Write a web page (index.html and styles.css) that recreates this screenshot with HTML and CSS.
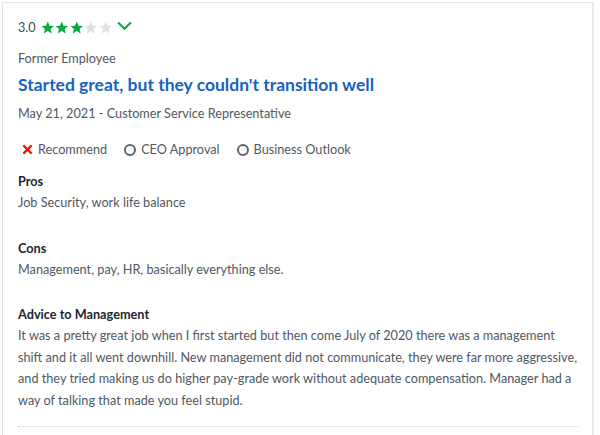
FILE: index.html
```html
<!DOCTYPE html>
<html>
<head>
<meta charset="utf-8">
<link rel="stylesheet" href="styles.css">
</head>
<body>
<div class="card">
  <div class="rating">
    <span class="score">3.0</span>
    <span class="stars">
      <svg class="star on" viewBox="0 0 24 24"><path d="M12 1l3.2 7.3 7.9.7-6 5.2 1.8 7.8L12 17.9 5.1 22l1.8-7.8-6-5.2 7.9-.7z"/></svg>
      <svg class="star on" viewBox="0 0 24 24"><path d="M12 1l3.2 7.3 7.9.7-6 5.2 1.8 7.8L12 17.9 5.1 22l1.8-7.8-6-5.2 7.9-.7z"/></svg>
      <svg class="star on" viewBox="0 0 24 24"><path d="M12 1l3.2 7.3 7.9.7-6 5.2 1.8 7.8L12 17.9 5.1 22l1.8-7.8-6-5.2 7.9-.7z"/></svg>
      <svg class="star off" viewBox="0 0 24 24"><path d="M12 1l3.2 7.3 7.9.7-6 5.2 1.8 7.8L12 17.9 5.1 22l1.8-7.8-6-5.2 7.9-.7z"/></svg>
      <svg class="star off" viewBox="0 0 24 24"><path d="M12 1l3.2 7.3 7.9.7-6 5.2 1.8 7.8L12 17.9 5.1 22l1.8-7.8-6-5.2 7.9-.7z"/></svg>
    </span>
    <svg class="chevron" viewBox="0 0 16 10"><path d="M1.2 1.2L8 8l6.8-6.8" fill="none" stroke="#0caa41" stroke-width="2.2"/></svg>
  </div>
  <div class="status">Former Employee</div>
  <h2 class="title">Started great, but they couldn't transition well</h2>
  <div class="meta">May 21, 2021 - Customer Service Representative</div>
  <div class="indicators">
    <span class="ind">
      <svg class="xicon" viewBox="0 0 12 12"><path d="M1.5 1.5l9 9M10.5 1.5l-9 9" stroke="#e81c00" stroke-width="2.4" fill="none"/></svg>
      Recommend
    </span>
    <span class="ind"><span class="ring"></span>CEO Approval</span>
    <span class="ind"><span class="ring"></span>Business Outlook</span>
  </div>
  <div class="section">
    <div class="label">Pros</div>
    <p class="text">Job Security, work life balance</p>
  </div>
  <div class="section">
    <div class="label">Cons</div>
    <p class="text">Management, pay, HR, basically everything else.</p>
  </div>
  <div class="section advice">
    <div class="label">Advice to Management</div>
    <p class="text para">It was a pretty great job when I first started but then come July of 2020 there was a management shift and it all went downhill. New management did not communicate, they were far more aggressive, and they tried making us do higher pay-grade work without adequate compensation. Manager had a way of talking that made you feel stupid.</p>
  </div>
  <div class="divider"></div>
</div>
</body>
</html>
```
FILE: styles.css
```css
html, body {
  margin: 0;
  padding: 0;
  background: #fff;
}
body {
  padding: 2px 0 0 2px;
  font-family: Lato, "Open Sans", sans-serif;
  color: #505863;
  font-size: 12.7px;
  line-height: 21px;
  overflow: hidden;
}
.card {
  width: 558px;
  height: 418px;
  border: 1px solid #e4e4e4;
  border-bottom: none;
  box-shadow: 1px 0 0 #f0f0f0;
  padding: 14px 16px 0 15px;
  overflow: hidden;
}
.rating {
  display: flex;
  align-items: center;
  height: 21px;
}
.score {
  color: #454c56;
  margin-right: 5px;
}
.stars {
  display: flex;
  gap: 1px;
}
.star {
  width: 13.5px;
  height: 13.5px;
}
.star.on { fill: #0caa41; }
.star.off { fill: #dee0e3; }
.chevron {
  width: 15px;
  height: 10px;
  margin-left: 5px;
  margin-top: -4px;
}
.status {
  margin-top: 10px;
}
.title {
  margin: 3px 0 0;
  font-size: 17.5px;
  line-height: 26px;
  font-weight: 700;
  color: #1861bf;
}
.meta {
  margin-top: 5px;
}
.indicators {
  display: flex;
  gap: 17px;
  margin-top: 15px;
  padding-left: 4px;
}
.ind {
  display: flex;
  align-items: center;
  gap: 5px;
}
.xicon {
  width: 11px;
  height: 11px;
}
.ring {
  width: 8px;
  height: 8px;
  border: 2.5px solid #5d6570;
  border-radius: 50%;
  box-sizing: content-box;
}
.section {
  margin-top: 11px;
}
.section + .section {
  margin-top: 25px;
}
.section.advice {
  margin-top: 24px;
}
.label {
  font-weight: 700;
  color: #20262e;
}
.text {
  margin: 0;
}
.para {
  line-height: 21.7px;
  margin-right: -4px;
}
.divider {
  margin-top: 14px;
  border-top: 1px dotted #cfd1d4;
  width: 560px;
}
```
